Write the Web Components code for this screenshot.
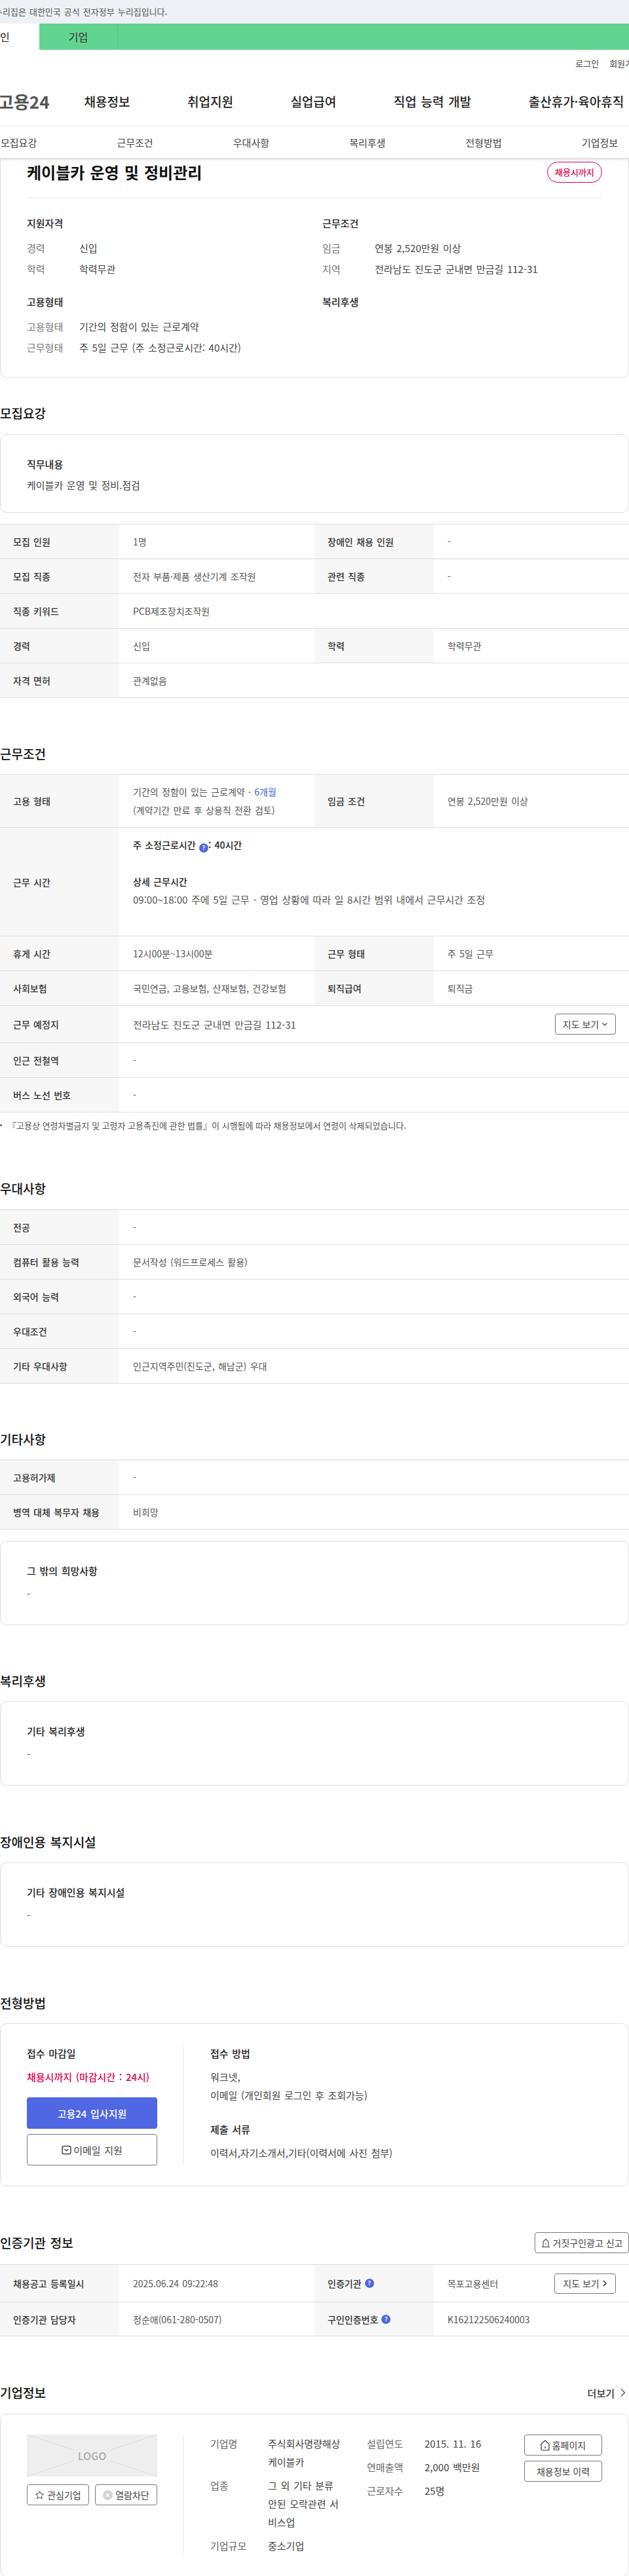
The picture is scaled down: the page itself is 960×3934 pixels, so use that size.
<!DOCTYPE html>
<html lang="ko">
<head>
<meta charset="utf-8">
<title>고용24</title>
<style>
  html, body { margin: 0; padding: 0; background: #fff; }
  body { width: 960px; overflow-x: hidden; font-family: "Noto Sans CJK KR", "Noto Sans", sans-serif; color: #222; word-spacing: .09em; }
  .tall { padding-top: 12px; line-height: 28px; }
  .tall b { font-weight: 500; color: #222; }
  .gap { height: 28px; }
  .blue { color: #3b62e0; }
  spec-table + note-line { margin-top: 10px; }
</style>
</head>
<body>

<site-header></site-header>

<summary-card></summary-card>

<section-title style="margin:38px 0 16px">모집요강</section-title>
<text-card title="직무내용">케이블카 운영 및 정비.점검</text-card>
<spec-table style="margin-top:17px">
  <spec-row><spec-item label="모집 인원">1명</spec-item><spec-item label="장애인 채용 인원">-</spec-item></spec-row>
  <spec-row><spec-item label="모집 직종">전자 부품·제품 생산기계 조작원</spec-item><spec-item label="관련 직종">-</spec-item></spec-row>
  <spec-row><spec-item label="직종 키워드">PCB제조장치조작원</spec-item></spec-row>
  <spec-row><spec-item label="경력">신입</spec-item><spec-item label="학력">학력무관</spec-item></spec-row>
  <spec-row><spec-item label="자격 면허">관계없음</spec-item></spec-row>
</spec-table>

<section-title style="margin:69px 0 15px">근무조건</section-title>
<spec-table>
  <spec-row style="--h:81px"><spec-item label="고용 형태"><div style="line-height:28px">기간의 정함이 있는 근로계약 · <span class="blue">6개월</span><br>(계약기간 만료 후 상용직 전환 검토)</div></spec-item><spec-item label="임금 조건">연봉 2,520만원 이상</spec-item></spec-row>
  <spec-row style="--h:166px"><spec-item label="근무 시간" top><div class="tall"><b>주 소정근로시간 <help-mark></help-mark>: 40시간</b><div class="gap"></div><b>상세 근무시간</b><br><span style="font-size:15px">09:00~18:00 주에 5일 근무 - 영업 상황에 따라 일 8시간 범위 내에서 근무시간 조정</span></div></spec-item></spec-row>
  <spec-row style="--h:53px"><spec-item label="휴게 시간">12시00분~13시00분</spec-item><spec-item label="근무 형태">주 5일 근무</spec-item></spec-row>
  <spec-row><spec-item label="사회보험">국민연금, 고용보험, 산재보험, 건강보험</spec-item><spec-item label="퇴직급여">퇴직금</spec-item></spec-row>
  <spec-row style="--h:57px"><spec-item label="근무 예정지"><span style="font-size:15px">전라남도 진도군 군내면 만금길 112-31</span><outline-button slot="action" style="width:93px;height:32px"><span>지도 보기</span><svg width="10" height="10" viewBox="0 0 10 10" fill="none" stroke="#444" stroke-width="1.2"><path d="M1.5 3.5 5 7l3.500-3.500"/></svg></outline-button></spec-item></spec-row>
  <spec-row><spec-item label="인근 전철역">-</spec-item></spec-row>
  <spec-row><spec-item label="버스 노선 번호">-</spec-item></spec-row>
</spec-table>
<note-line>『고용상 연령차별금지 및 고령자 고용촉진에 관한 법률』이 시행됨에 따라 채용정보에서 연령이 삭제되었습니다.</note-line>

<section-title style="margin:70px 0 16px">우대사항</section-title>
<spec-table>
  <spec-row><spec-item label="전공">-</spec-item></spec-row>
  <spec-row><spec-item label="컴퓨터 활용 능력">문서작성 (워드프로세스 활용)</spec-item></spec-row>
  <spec-row><spec-item label="외국어 능력">-</spec-item></spec-row>
  <spec-row><spec-item label="우대조건">-</spec-item></spec-row>
  <spec-row><spec-item label="기타 우대사항">인근지역주민(진도군, 해남군) 우대</spec-item></spec-row>
</spec-table>

<section-title style="margin:69px 0 15px">기타사항</section-title>
<spec-table>
  <spec-row><spec-item label="고용허가제">-</spec-item></spec-row>
  <spec-row><spec-item label="병역 대체 복무자 채용">비희망</spec-item></spec-row>
</spec-table>
<text-card title="그 밖의 희망사항" wide style="margin-top:17px">-</text-card>

<section-title style="margin:69px 0 15px">복리후생</section-title>
<text-card title="기타 복리후생" wide>-</text-card>

<section-title style="margin:70px 0 15px">장애인용 복지시설</section-title>
<text-card title="기타 장애인용 복지시설" wide>-</text-card>

<section-title style="margin:70px 0 15px">전형방법</section-title>
<apply-card></apply-card>

<section-title style="margin:70px 0 17px">인증기관 정보
  <outline-button slot="action" style="width:144px;height:32px"><svg width="14" height="15" viewBox="0 0 14 15" fill="none" stroke="#444" stroke-width="1.1"><path d="M3 13.500V5.500L7 1.500l4 4v8"/><path d="M1 13.500h12"/><path d="M7 7.500v2"/></svg><span>거짓구인광고 신고</span></outline-button>
</section-title>
<spec-table>
  <spec-row style="--h:57px"><spec-item label="채용공고 등록일시">2025.06.24 09:22:48</spec-item><spec-item label="인증기관" hint>목포고용센터<outline-button slot="action" style="width:94px;height:31px"><span>지도 보기</span><svg width="8" height="12" viewBox="0 0 8 12" fill="none" stroke="#333" stroke-width="1.500"><path d="M2 2l4 4-4 4"/></svg></outline-button></spec-item></spec-row>
  <spec-row style="--h:52px"><spec-item label="인증기관 담당자">정순애(061-280-0507)</spec-item><spec-item label="구인인증번호" hint>K162122506240003</spec-item></spec-row>
</spec-table>

<section-title style="margin:70px 0 16px">기업정보
  <more-link slot="action">더보기</more-link>
</section-title>
<company-card></company-card>

<script>
// every element is: template string + open shadow root
function define(name, html) {
  const template = document.createElement('template');
  template.innerHTML = html;
  customElements.define(name, class extends HTMLElement {
    constructor() {
      super();
      this.attachShadow({ mode: 'open' }).appendChild(template.content.cloneNode(true));
      this.shadowRoot.querySelectorAll('[data-attr]').forEach(el => {
        el.textContent = this.getAttribute(el.dataset.attr) || '';
      });
    }
  });
}

const FONT = `"Noto Sans CJK KR", "Noto Sans", sans-serif`;

define('site-header', `
  <style>
    :host { display: block; position: relative; z-index: 2; background: #fff; height: 241px; overflow: hidden; box-shadow: 0 2px 4px rgba(0,0,0,.18); font-family: ${FONT}; }
    .gov { height: 36px; background: #edf0f5; font-size: 13px; line-height: 36px; color: #555; text-indent: -8px; white-space: nowrap; }
    .tabs { height: 40px; display: flex; background: #62d491; font-size: 16px; line-height: 40px; color: #333; margin-left: -60px; }
    .tabs div { width: 120px; text-align: center; }
    .tabs .on { background: #fff; color: #222; }
    .tabs .off { width: 119px; border-right: 1px solid #56c583; }
    .util { height: 40px; display: flex; justify-content: flex-end; align-items: center; gap: 16px; margin-right: -18px; font-size: 13px; color: #444; }
    .main { height: 76px; display: flex; align-items: center; white-space: nowrap; margin-left: -3px; }
    .logo { font-size: 26px; font-weight: 700; color: #555; margin-right: 53px; word-spacing: 0; }
    nav { display: flex; gap: 87.5px; font-size: 19px; font-weight: 500; color: #222; }
    .sub { height: 49px; border-top: 1px solid #e6e6e6; box-sizing: border-box; display: flex; align-items: center; gap: 122.200px; padding-left: 1px; font-size: 15px; color: #444; word-spacing: 0; }
  </style>
  <div class="gov">누리집은 대한민국 공식 전자정부 누리집입니다.</div>
  <div class="tabs"><div class="on">개인</div><div class="off">기업</div></div>
  <div class="util"><span>로그인</span><span>회원가입</span></div>
  <div class="main"><span class="logo">고용24</span><nav><span>채용정보</span><span>취업지원</span><span>실업급여</span><span>직업 능력 개발</span><span>출산휴가·육아휴직</span></nav></div>
  <div class="sub"><span>모집요강</span><span>근무조건</span><span>우대사항</span><span>복리후생</span><span>전형방법</span><span>기업정보</span></div>
`);

define('info-block', `
  <style>
    :host { display: block; font-family: ${FONT}; font-size: 15px; }
    h3 { margin: 0 0 9px; font-size: 15px; line-height: 24px; font-weight: 500; color: #222; }
  </style>
  <h3 data-attr="title"></h3>
  <slot></slot>
`);

define('info-row', `
  <style>
    :host { display: grid; grid-template-columns: 80px 1fr; height: 32px; align-items: center; font-family: ${FONT}; font-size: 15px; color: #444; }
    span { color: #777; }
  </style>
  <span data-attr="label"></span><div><slot></slot></div>
`);

define('summary-card', `
  <style>
    :host { display: block; height: 336px; box-sizing: border-box; border: 1px solid #dfdfdf; border-top: 0; border-radius: 0 0 10px 10px; padding: 0 40px; font-family: ${FONT}; }
    .head { height: 62px; box-sizing: border-box; border-bottom: 1px solid #e8e8e8; padding-top: 6px; display: flex; justify-content: space-between; align-items: flex-start; }
    h1 { margin: 0; font-size: 24px; line-height: 32px; font-weight: 700; color: #111; }
    .badge { width: 84px; height: 32px; box-sizing: border-box; border: 1px solid #e6004d; border-radius: 16px; color: #e6004d; font-size: 13px; font-weight: 500; line-height: 30px; text-align: center; word-spacing: 0; }
    .grid { display: grid; grid-template-columns: 451px 1fr; grid-template-rows: auto auto; row-gap: 23px; padding-top: 26px; }
  </style>
  <div class="head"><h1>케이블카 운영 및 정비관리</h1><div class="badge">채용시까지</div></div>
  <div class="grid">
    <info-block title="지원자격"><info-row label="경력">신입</info-row><info-row label="학력">학력무관</info-row></info-block>
    <info-block title="근무조건"><info-row label="임금">연봉 2,520만원 이상</info-row><info-row label="지역">전라남도 진도군 군내면 만금길 112-31</info-row></info-block>
    <info-block title="고용형태"><info-row label="고용형태">기간의 정함이 있는 근로계약</info-row><info-row label="근무형태">주 5일 근무 (주 소정근로시간: 40시간)</info-row></info-block>
    <info-block title="복리후생"></info-block>
  </div>
`);

define('section-title', `
  <style>
    :host { display: flex; justify-content: space-between; align-items: center; height: 32px; font-family: ${FONT}; }
    h2 { margin: 0; font-size: 19px; font-weight: 500; color: #111; line-height: 32px; }
  </style>
  <h2><slot></slot></h2><slot name="action"></slot>
`);

define('text-card', `
  <style>
    :host { display: block; height: 120px; box-sizing: border-box; border: 1px solid #dfdfdf; border-radius: 10px; padding: 33px 40px 0; font-family: ${FONT}; font-size: 15px; color: #444; }
    :host([wide]) { height: 129px; }
    h4 { margin: 0 0 8px; font-size: 15px; line-height: 24px; font-weight: 500; color: #222; }
    :host([wide]) h4 { margin-bottom: 11px; }
    div { line-height: 24px; }
  </style>
  <h4 data-attr="title"></h4><div><slot></slot></div>
`);

define('spec-table', `
  <style>:host { display: block; border-top: 1px solid #dedede; font-family: ${FONT}; }</style>
  <slot></slot>
`);

define('spec-row', `
  <style>:host { display: flex; height: var(--h, 53px); box-sizing: border-box; border-bottom: 1px solid #dedede; }</style>
  <slot></slot>
`);

class SpecItem extends HTMLElement {
  constructor() {
    super();
    const hint = this.hasAttribute('hint') ? '<help-mark></help-mark>' : '';
    this.attachShadow({ mode: 'open' }).innerHTML = `
      <style>
        :host { flex: 1 1 0; min-width: 0; display: grid; grid-template-columns: 182px 1fr; font-size: 14px; }
        .label { background: #f7f7f7; padding-left: 20px; display: flex; align-items: center; gap: 5px; font-weight: 500; color: #333; }
        .value { padding: 0 20px 0 21px; display: flex; align-items: center; justify-content: space-between; color: #555; }
        :host([top]) .value { align-items: flex-start; }
      </style>
      <div class="label">${this.getAttribute('label')}${hint}</div>
      <div class="value"><div><slot></slot></div><slot name="action"></slot></div>`;
  }
}
customElements.define('spec-item', SpecItem);

define('help-mark', `
  <style>
    :host { display: inline-block; width: 14px; height: 14px; border-radius: 50%; background: #4f67e3; color: #fff; font: 700 9px/14px ${FONT}; text-align: center; vertical-align: -2px; }
  </style>?
`);

define('outline-button', `
  <style>
    :host { display: inline-flex; align-items: center; justify-content: center; gap: 4px; box-sizing: border-box; border: 1px solid #777; border-radius: 4px; background: #fff; font-family: ${FONT}; font-size: 14px; color: #444; word-spacing: 0; white-space: nowrap; flex: none; }
  </style>
  <slot></slot>
`);

define('note-line', `
  <style>
    :host { display: block; height: 20px; padding-left: 12px; position: relative; font-family: ${FONT}; font-size: 13px; line-height: 20px; color: #555; white-space: nowrap; word-spacing: 0; }
    :host::before { content: ""; position: absolute; left: 0; top: 8px; width: 3px; height: 3px; border-radius: 50%; background: #555; }
  </style>
  <slot></slot>
`);

define('more-link', `
  <style>
    :host { display: flex; align-items: center; gap: 9px; margin-right: 5px; font-family: ${FONT}; font-size: 15px; font-weight: 500; color: #333; }
  </style>
  <slot></slot><svg width="8" height="14" viewBox="0 0 8 14" fill="none" stroke="#444" stroke-width="1.200"><path d="M1 1.500 6.500 7 1 12.500"/></svg>
`);

define('apply-card', `
  <style>
    :host { display: flex; height: 249px; box-sizing: border-box; border: 1px solid #dfdfdf; border-radius: 10px; padding: 32px 0 0 40px; font-family: ${FONT}; font-size: 15px; color: #444; }
    .left { width: 199px; margin-right: 40px; }
    .right { border-left: 1px solid #e8e8e8; padding-left: 40px; height: 184px; }
    h4 { margin: 0 0 11px; font-size: 15px; line-height: 26px; font-weight: 500; color: #222; }
    .red { color: #e6004d; font-weight: 500; line-height: 24px; margin-bottom: 19px; }
    .btn { height: 48px; box-sizing: border-box; border-radius: 4px; display: flex; align-items: center; justify-content: center; gap: 3px; font-size: 15px; }
    .primary { background: #4f67e3; color: #fff; font-weight: 500; margin-bottom: 8px; }
    .ghost { border: 1px solid #777; color: #444; }
    p { margin: 0; line-height: 28px; }
    .right h4 { margin-bottom: 9px; }
    .sp { height: 25px; }
  </style>
  <div class="left">
    <h4>접수 마감일</h4>
    <div class="red">채용시까지 (마감시간 : 24시)</div>
    <div class="btn primary">고용24 입사지원</div>
    <div class="btn ghost"><svg width="15" height="15" viewBox="0 0 15 15" fill="none" stroke="#444" stroke-width="1.500"><rect x="1" y="1.500" width="13" height="12" rx="3"/><path d="M4.500 6 7.500 8.500 10.500 6"/></svg><span>이메일 지원</span></div>
  </div>
  <div class="right">
    <h4>접수 방법</h4>
    <p>워크넷,</p><p>이메일 (개인회원 로그인 후 조회가능)</p>
    <div class="sp"></div>
    <h4>제출 서류</h4>
    <p>이력서,자기소개서,기타(이력서에 사진 첨부)</p>
  </div>
`);

define('company-card', `
  <style>
    :host { display: flex; height: 249px; box-sizing: border-box; border: 1px solid #dfdfdf; border-radius: 10px; padding: 31px 0 0 40px; font-family: ${FONT}; font-size: 15px; color: #444; }
    .left { width: 199px; margin-right: 40px; }
    .logo { height: 64px; position: relative; background: #eee; display: flex; align-items: center; justify-content: center; font-size: 16px; font-weight: 500; color: #aaa; margin-bottom: 12px; word-spacing: 0; }
    .logo svg { position: absolute; inset: 0; }
    .logo span { position: relative; }
    .pair { display: flex; gap: 9px; }
    .right { border-left: 1px solid #e8e8e8; padding-left: 40px; height: 184px; display: flex; }
    dl { margin: 0; display: grid; grid-template-columns: 88px 111px; row-gap: 8px; align-content: start; line-height: 28px; margin-right: 40px; }
    dl.b { margin-right: 0; width: 240px; grid-template-columns: 88px 1fr; }
    dt { color: #666; }
    dd { margin: 0; word-break: break-all; }
    .links { display: flex; flex-direction: column; gap: 8px; width: 119px; flex: none; }
    .links outline-button { width: 119px; height: 32px; }
  </style>
  <div class="left">
    <div class="logo"><svg width="199" height="64" viewBox="0 0 199 64" fill="none" stroke="#dcdcdc"><path d="M0 0 72 24M0 64 72 40M199 0 127 24M199 64 127 40"/></svg><span>LOGO</span></div>
    <div class="pair">
      <outline-button style="width:95px;height:32px"><svg width="15" height="15" viewBox="0 0 15 15" fill="none" stroke="#444"><path d="M7.500 1.500 9.300 5.400 13.500 5.900 10.400 8.800 11.200 13 7.500 10.900 3.800 13 4.600 8.800 1.500 5.900 5.700 5.400Z"/></svg><span>관심기업</span></outline-button>
      <outline-button style="width:95px;height:32px"><svg width="15" height="15" viewBox="0 0 15 15" fill="none"><circle cx="7.500" cy="7.500" r="7.500" fill="#d4d4d4"/><path d="M4.800 4.800l5.400 5.400M10.200 4.800l-5.400 5.400" stroke="#fff" stroke-width="1.400"/></svg><span>열람차단</span></outline-button>
    </div>
  </div>
  <div class="right">
    <dl>
      <dt>기업명</dt><dd>주식회사명량해상 케이블카</dd>
      <dt>업종</dt><dd>그 외 기타 분류 안된 오락관련 서비스업</dd>
      <dt>기업규모</dt><dd>중소기업</dd>
    </dl>
    <dl class="b">
      <dt>설립연도</dt><dd>2015. 11. 16</dd>
      <dt>연매출액</dt><dd>2,000 백만원</dd>
      <dt>근로자수</dt><dd>25명</dd>
    </dl>
    <div class="links">
      <outline-button><svg width="14" height="17" viewBox="0 0 14 17" fill="none" stroke="#333" stroke-width="1.200"><path d="M1 6.500 7 1l6 5.500V14a2 2 0 0 1-2 2H3a2 2 0 0 1-2-2Z"/><path d="M7 10v3"/></svg><span>홈페이지</span></outline-button>
      <outline-button>채용정보 이력</outline-button>
    </div>
  </div>
`);
</script>
</body>
</html>
